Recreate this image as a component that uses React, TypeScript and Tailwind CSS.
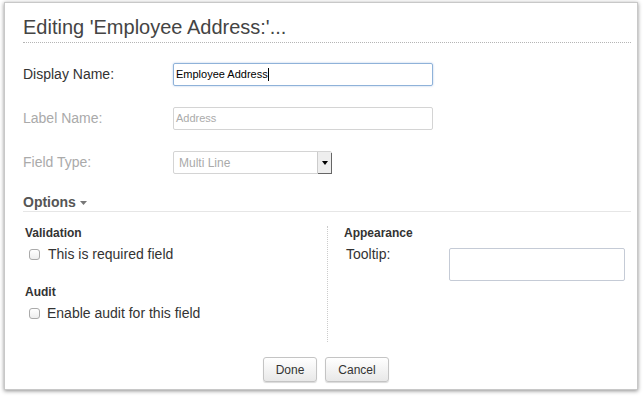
export default function App() {
  return (
    <div className="w-[644px] h-[397px] bg-white pt-[2px] pl-[4px] font-['Liberation_Sans',Arial,sans-serif]">
      <div className="w-[634px] h-[388px] bg-white border border-[#c8c8c8] shadow-[0_1px_4px_rgba(0,0,0,0.45)] pl-[18px] pr-[6px] flex flex-col">
        <h1 className="mt-[12px] text-[20px] leading-[24px] text-[#444] pb-[3px] border-b border-dotted border-[#b5b5b5]">
          Editing 'Employee Address:'...
        </h1>

        <div className="mt-[20px] flex items-center h-[23px]">
          <span className="w-[150px] text-[14px] text-[#333]">Display Name:</span>
          <div className="w-[260px] h-[23px] border border-[#8fb2d9] rounded-[2px] flex items-center px-[2px] text-[11px] text-black shadow-[0_0_2px_rgba(90,140,210,0.5)]">
            Employee Address<span className="w-px h-[13px] bg-black" />
          </div>
        </div>

        <div className="mt-[21px] flex items-center h-[23px]">
          <span className="w-[150px] text-[14px] text-[#aaa]">Label Name:</span>
          <div className="w-[260px] h-[23px] border border-[#d4d4d4] rounded-[2px] flex items-center px-[2px] text-[11px] text-[#aaa]">
            Address
          </div>
        </div>

        <div className="mt-[21px] flex items-center h-[23px]">
          <span className="w-[150px] text-[14px] text-[#aaa]">Field Type:</span>
          <div className="w-[159px] h-[23px] border border-[#d4d4d4] rounded-[2px] flex items-center pl-[5px] text-[12px] text-[#aaa]">
            <span className="flex-1">Multi Line</span>
            <span className="w-[14px] h-[21px] bg-[#eee] border-l border-[#ccc] shadow-[1px_1px_0_#666] flex items-center justify-center">
              <svg width="6" height="4" viewBox="0 0 6 4"><path d="M0 0h6L3 4z" fill="#000" /></svg>
            </span>
          </div>
        </div>

        <div className="mt-[19px] border-b border-[#e6e6e6] flex items-center gap-[4px] leading-[18px]">
          <span className="text-[14px] font-bold text-[#555]">Options</span>
          <svg width="7" height="4" viewBox="0 0 7 4" className="mt-[2px]"><path d="M0 0h7L3.5 4z" fill="#777" /></svg>
        </div>

        <div className="flex mt-[14px] h-[116px]">
          <div className="w-[305px] shrink-0 border-r border-dotted border-[#ccc] pl-[2px]">
            <div className="text-[12px] font-bold text-[#333] leading-[15px]">Validation</div>
            <label className="mt-[3px] flex items-center gap-[8px] text-[14px] text-[#333]">
              <span className="ml-[4px] w-[11px] h-[11px] border border-[#aaa] rounded-[3px] bg-gradient-to-b from-white to-[#eee]" />
              This is required field
            </label>
            <div className="mt-[20px] text-[12px] font-bold text-[#333] leading-[15px]">Audit</div>
            <label className="mt-[3px] flex items-center gap-[7px] text-[14px] text-[#333]">
              <span className="ml-[4px] w-[11px] h-[11px] border border-[#aaa] rounded-[3px] bg-gradient-to-b from-white to-[#eee]" />
              Enable audit for this field
            </label>
          </div>
          <div className="pl-[16px]">
            <div className="text-[12px] font-bold text-[#333] leading-[15px]">Appearance</div>
            <div className="flex mt-[3px]">
              <span className="w-[105px] pl-[2px] text-[14px] text-[#333]">Tooltip:</span>
              <div className="mt-[4px] w-[176px] h-[33px] border border-[#c5cbd6] rounded-[2px]" />
            </div>
          </div>
        </div>

        <div className="mt-[15px] mr-[2px] flex justify-center gap-[8px]">
          <button className="w-[54px] h-[25px] border border-[#c4c4c4] rounded-[3px] bg-gradient-to-b from-white to-[#e8e8e8] text-[12px] text-[#333] shadow-[0_1px_1px_rgba(0,0,0,0.15)]">
            Done
          </button>
          <button className="w-[64px] h-[25px] border border-[#c4c4c4] rounded-[3px] bg-gradient-to-b from-white to-[#e8e8e8] text-[12px] text-[#333] shadow-[0_1px_1px_rgba(0,0,0,0.15)]">
            Cancel
          </button>
        </div>
      </div>
    </div>
  );
}
